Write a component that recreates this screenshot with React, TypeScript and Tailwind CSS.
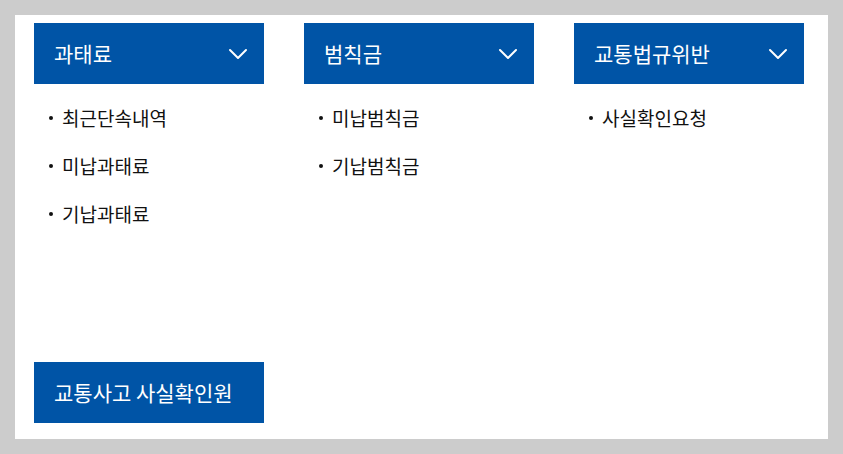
import { ChevronDown } from "lucide-react";

const menus = [
  { title: "과태료", items: ["최근단속내역", "미납과태료", "기납과태료"] },
  { title: "범칙금", items: ["미납범칙금", "기납범칙금"] },
  { title: "교통법규위반", items: ["사실확인요청"] },
];

export default function App() {
  return (
    <div
      className="h-screen bg-[#cccccc] p-[15px]"
      style={{ fontFamily: '"Noto Sans CJK KR", "Noto Sans", sans-serif' }}
    >
      <div className="flex h-full flex-col justify-between bg-white pb-4 pl-[19px] pt-2">
        <div className="grid grid-cols-[230px_230px_230px] gap-x-10">
          {menus.map((menu) => (
            <div key={menu.title}>
              <div className="flex h-[61px] items-center justify-between bg-[#0054a6] pl-5 pr-[10px] text-[21px] text-white">
                <span>{menu.title}</span>
                <ChevronDown size={32} strokeWidth={1.5} />
              </div>
              <ul className="mt-[10px] pl-[15px]">
                {menu.items.map((item) => (
                  <li key={item} className="flex h-12 items-center gap-[9px] text-[19px] text-[#111]">
                    <span className="h-1 w-1 rounded-full bg-[#111]" />
                    {item}
                  </li>
                ))}
              </ul>
            </div>
          ))}
        </div>
        <div className="flex h-[61px] w-[230px] items-center bg-[#0054a6] pl-5 text-[21px] text-white">
          교통사고 사실확인원
        </div>
      </div>
    </div>
  );
}
